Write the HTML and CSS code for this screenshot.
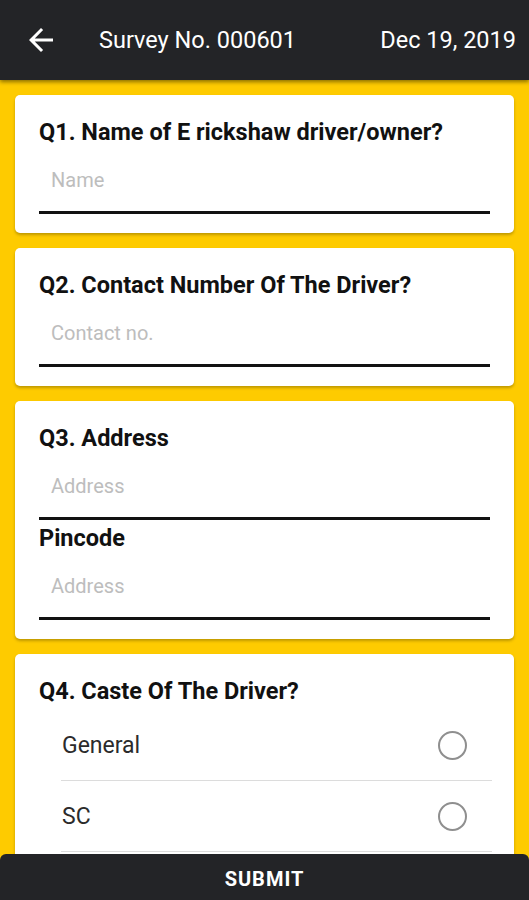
FILE: index.html
```html
<!DOCTYPE html>
<html lang="en">
<head>
    <meta charset="UTF-8">
    <meta name="viewport" content="width=device-width, initial-scale=1.0">
    <title>Survey No. 000601</title>
    <link rel="stylesheet" href="styles.css">
</head>
<body>
    <header class="topbar">
        <button class="back" type="button" aria-label="Back">
            <svg width="24" height="24" viewBox="4 4 16 16"><path d="M20 11H7.83l5.59-5.59L12 4l-8 8 8 8 1.41-1.41L7.83 13H20v-2z" fill="#fff"/></svg>
        </button>
        <span class="survey-no">Survey No. 000601</span>
        <span class="survey-date">Dec 19, 2019</span>
    </header>

    <main class="content">
        <section class="card">
            <h2 class="question">Q1. Name of E rickshaw driver/owner?</h2>
            <input class="field" type="text" placeholder="Name">
        </section>

        <section class="card">
            <h2 class="question">Q2. Contact Number Of The Driver?</h2>
            <input class="field" type="tel" placeholder="Contact no.">
        </section>

        <section class="card">
            <h2 class="question">Q3. Address</h2>
            <input class="field" type="text" placeholder="Address">
            <h3 class="question sub">Pincode</h3>
            <input class="field" type="text" placeholder="Address">
        </section>

        <section class="card">
            <h2 class="question">Q4. Caste Of The Driver?</h2>
            <ul class="options">
                <li class="option"><span>General</span><span class="radio"></span></li>
                <li class="option"><span>SC</span><span class="radio"></span></li>
            </ul>
        </section>
    </main>

    <footer class="submit-bar">
        <button class="submit" type="button">SUBMIT</button>
    </footer>
</body>
</html>
```

FILE: styles.css
```css
/* Survey form, dark bars on a yellow page */
body {
    margin: 0;
    height: 100vh;
    display: flex;
    flex-direction: column;
    overflow: hidden;
    font-family: Roboto, "Liberation Sans", sans-serif;
    background-color: #fecb00;
}

.topbar {
    height: 80px;
    flex-shrink: 0;
    display: flex;
    align-items: center;
    padding: 0 13px 0 29px;
    background-color: #232427;
    color: #fff;
    box-shadow: 0 2px 4px rgba(0, 0, 0, 0.45);
    position: relative;
    z-index: 1;
}

.back {
    display: flex;
    padding: 0;
    border: none;
    background: none;
    margin-right: 46px;
}

.survey-no {
    font-size: 23.5px;
    flex: 1;
}

.survey-date {
    font-size: 23.5px;
}

.content {
    flex: 1;
    overflow: hidden;
    padding: 15px 15px 0;
    display: flex;
    flex-direction: column;
    gap: 15px;
}

.card {
    background: #fff;
    border-radius: 5px;
    padding: 24px 24px 19px;
    box-shadow: 0 2px 3px rgba(0, 0, 0, 0.25);
    flex-shrink: 0;
}

.question {
    margin: 0;
    font-size: 23.5px;
    line-height: 27px;
    font-weight: 700;
    color: #111;
}

.question.sub {
    margin-top: 5px;
}

.field {
    display: block;
    width: 100%;
    box-sizing: border-box;
    margin-top: 9px;
    padding: 13px 12px 19px;
    font-family: inherit;
    font-size: 20px;
    line-height: 24px;
    border: none;
    border-bottom: 3px solid #111;
    outline: none;
    background: none;
}

.field::placeholder {
    color: #bdbdbd;
}

.options {
    list-style: none;
    margin: 5px -2px 0 0;
    padding: 0 0 0 22px;
}

.option {
    height: 70px;
    display: flex;
    align-items: center;
    justify-content: space-between;
    border-bottom: 1px solid #dcdcdc;
    font-size: 23px;
    color: #2b2b2b;
    padding: 0 25px 0 1px;
}

.radio {
    width: 25px;
    height: 25px;
    border: 2px solid #8f8f8f;
    border-radius: 50%;
}

.submit-bar {
    height: 46px;
    flex-shrink: 0;
    background-color: #232427;
    border-radius: 6px 6px 0 0;
    display: flex;
    position: relative;
    z-index: 1;
}

.submit {
    flex: 1;
    border: none;
    background: none;
    color: #fff;
    font-family: inherit;
    font-size: 20px;
    font-weight: 700;
    letter-spacing: 1px;
    padding: 4px 0 0;
}
```
